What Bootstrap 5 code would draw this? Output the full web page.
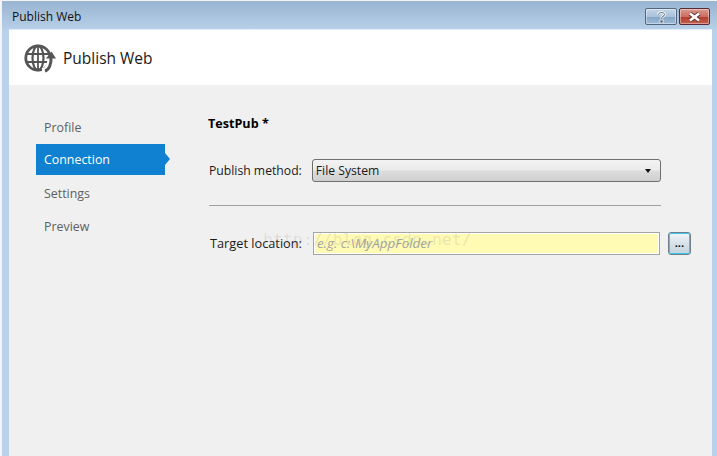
<!DOCTYPE html>
<html lang="en">
<head>
<meta charset="utf-8">
<title>Publish Web</title>
<link href="https://cdn.jsdelivr.net/npm/bootstrap@5.3.0/dist/css/bootstrap.min.css" rel="stylesheet">
<style>
html,body{margin:0;height:456px;overflow:hidden;background:#b9d1ea;}
body{font-family:"Open Sans","Noto Sans",sans-serif;font-size:12px;color:#1a1a1a;}
.win{height:456px;width:717px;background:linear-gradient(180deg,#99b4d1 0,#b9d1ea 30px);padding:0 5px 0 6px;border-left:2px solid #f4f4f4;border-top:1px solid #f4f4f4;}
.tbar{height:28px;padding:0 2px 0 4px;}
.tbar-title{font-size:12px;color:#111;padding-top:7px;}
.wbtn{height:17px;border-radius:2px;border:1px solid #54677f;display:flex;align-items:center;justify-content:center;box-shadow:inset 0 0 0 1px rgba(255,255,255,.4);margin-top:7px;}
.wbtn-help{width:32px;background:linear-gradient(180deg,#c3d5e7 0,#a9c1da 50%,#86a6c6 54%,#9fbcd8 100%);margin-right:2px;}
.wbtn-close{width:31px;background:linear-gradient(180deg,#dc9a90 0,#cb6d60 50%,#b33f30 54%,#c4604f 100%);border-color:#5a2a34;}
.hdr{height:56px;background:#fff;margin-left:1px;padding-left:15px;gap:7px;border-top:1px solid #e4edf6;}
.hdr-title{font-size:15.5px;color:#1a1a1a;padding-top:2px;}
.pane{height:371px;background:#f0f0f0;margin-left:1px;padding-left:27px;}
.side{width:129px;padding-top:26px;margin-right:43px;}
.side-item{height:33px;padding:1px 0 0 8px;display:flex;align-items:center;color:#5f5f5f;font-size:12.4px;position:relative;}
.side-on{height:31px;margin-bottom:2px;padding-top:1px;background:#0f81d0;color:#fff;}
.side-on::after{content:"";position:absolute;left:100%;top:9px;border-left:5px solid #0f81d0;border-top:6px solid transparent;border-bottom:6px solid transparent;}
.mainp{width:490px;position:relative;padding-top:30px;}
.ttl{font-size:12.6px;font-weight:700;color:#000;line-height:17px;margin-bottom:27px;}
.lbl{font-size:12.2px;color:#1a1a1a;white-space:nowrap;}
.lbl-a{margin-left:1px;padding-top:2px;}
.lbl-b{margin-left:2px;font-size:12.75px;}
.fake-select{width:349px;height:23px;margin-left:10px;border:1px solid #707070;border-radius:3px;background:linear-gradient(180deg,#f2f2f2 0,#ebebeb 48%,#dddddd 52%,#cfcfcf 100%);padding:1px 9px 0 3px;font-size:12.2px;color:#1a1a1a;}
.caret-d{border-top:4px solid #111;border-left:3.5px solid transparent;border-right:3.5px solid transparent;}
.rule{width:452px;height:1px;background:#a0a0a0;margin:23px 0 26px 1px;}
.txt{width:347px;height:23px;margin-left:11px;border:1px solid #a5a5a5;background:#fffab4;box-shadow:inset 0 0 0 1px #fff;padding:0 3px;font-size:13.4px;font-style:italic;color:#a3a3a3;}
.dots{width:23px;height:23px;margin-left:8px;border:1px solid #6f7f8c;outline:1px solid #3cc4ea;outline-offset:-2px;border-radius:3px;background:linear-gradient(180deg,#f1f5f8 0,#d7e2ea 50%,#c4d3dd 100%);font-size:11px;font-weight:700;color:#111;line-height:1;padding:0 0 2px;}
.wmark{position:absolute;left:55px;top:143px;font-family:"DejaVu Sans Mono","Liberation Mono",monospace;font-size:16.5px;color:rgba(120,120,120,.16);white-space:nowrap;pointer-events:none;}
</style>
</head>
<body>
<div class="win">
  <div class="tbar d-flex align-items-start justify-content-between">
    <div class="tbar-title">Publish Web</div>
    <div class="d-flex align-items-center">
      <div class="wbtn wbtn-help"><svg width="9" height="12" viewBox="0 0 9 12"><path d="M1.500 3.500C1.500 1 7.500 1 7.500 3.500C7.500 5.500 4.500 5.200 4.500 7.600" fill="none" stroke="#fff" stroke-width="2.600"/><path d="M1.500 3.500C1.500 1 7.500 1 7.500 3.500C7.500 5.500 4.500 5.200 4.500 7.600" fill="none" stroke="#4a5568" stroke-width="1"/><rect x="3" y="9" width="3" height="3" fill="#4a5568" stroke="#fff" stroke-width=".7"/></svg></div>
      <div class="wbtn wbtn-close"><svg width="15" height="10" viewBox="0 0 15 10"><path d="M3 1.500L12 8.500M12 1.500L3 8.500" stroke="#4d2a2a" stroke-width="4.200"/><path d="M3 1.500L12 8.500M12 1.500L3 8.500" stroke="#fff" stroke-width="2.800"/></svg></div>
    </div>
  </div>
  <div class="hdr d-flex align-items-center">
    <svg width="32" height="30" viewBox="0 0 32 30" fill="none" stroke="#555" aria-hidden="true">
      <circle cx="14" cy="15" r="12.200" stroke-width="2.800"/>
      <ellipse cx="14" cy="15" rx="5.500" ry="12.200" stroke-width="2.200"/>
      <path d="M2 11H26M2 19H26" stroke-width="2.200"/>
      <path d="M14 3V27" stroke-width="1.800"/>
      <path d="M18 28.500C24 28.500 27.500 22 27 13" stroke="#fff" stroke-width="7"/>
      <path d="M21 28C25 27 27.500 21 27 14" stroke-width="3"/>
      <path d="M22 15.500L27.500 8.500L32 15.500Z" fill="#555" stroke="none"/>
    </svg>
    <div class="hdr-title">Publish Web</div>
  </div>
  <div class="pane d-flex">
    <div class="side">
      <div class="side-item">Profile</div>
      <div class="side-item side-on">Connection</div>
      <div class="side-item">Settings</div>
      <div class="side-item">Preview</div>
    </div>
    <div class="mainp">
      <div class="ttl">TestPub *</div>
      <div class="d-flex align-items-center">
        <span class="lbl lbl-a">Publish method:</span>
        <div class="fake-select d-flex align-items-center justify-content-between"><span>File System</span><span class="caret-d"></span></div>
      </div>
      <div class="rule"></div>
      <div class="d-flex align-items-center">
        <span class="lbl lbl-b">Target location:</span>
        <div class="txt d-flex align-items-center">e.g. c:\MyAppFolder</div>
        <button type="button" class="dots">...</button>
      </div>
      <div class="wmark">http://blog.csdn.net/</div>
    </div>
  </div>
</div>
</body>
</html>
